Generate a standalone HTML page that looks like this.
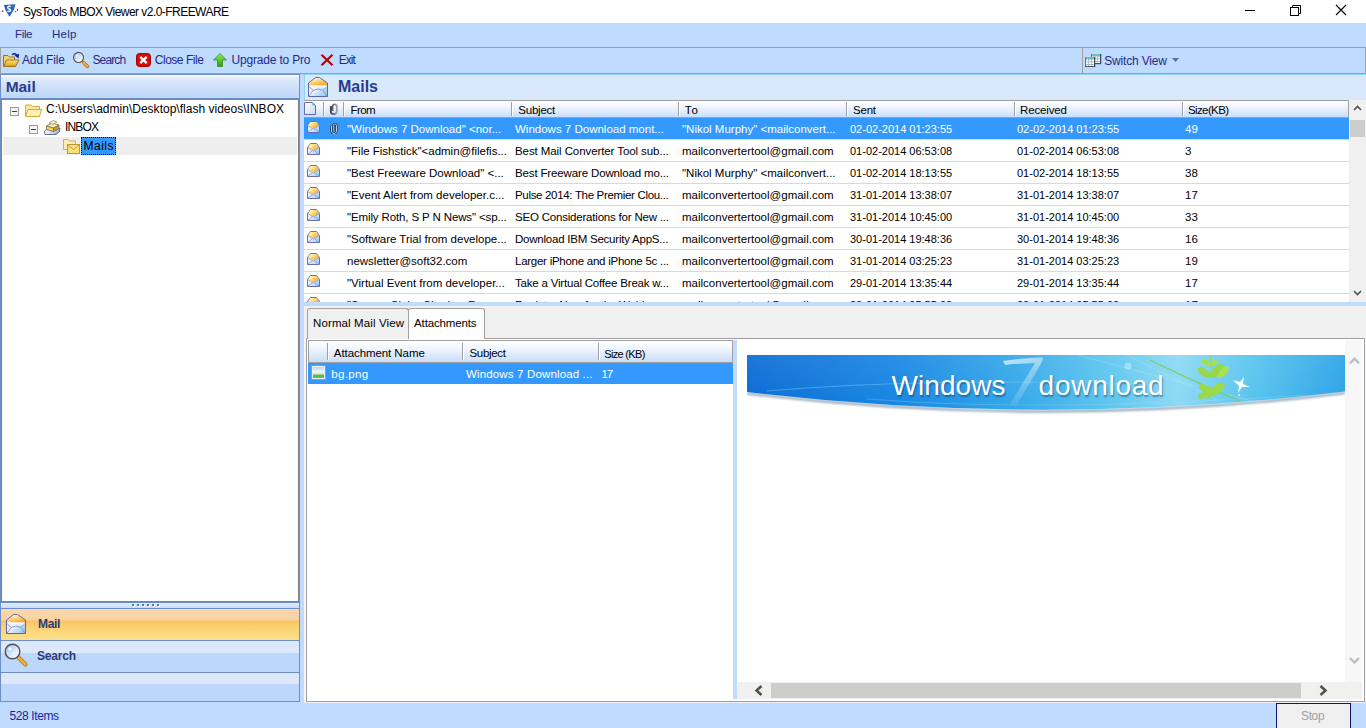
<!DOCTYPE html>
<html><head><meta charset="utf-8">
<style>
*{margin:0;padding:0;box-sizing:border-box}
html,body{width:1366px;height:728px;overflow:hidden;background:#BFDBFF;font-family:"Liberation Sans",sans-serif;position:relative}
.a{position:absolute}
.t{position:absolute;line-height:1;white-space:nowrap}
</style></head><body>

<div class="a" style="left:0;top:0;width:1366px;height:23px;background:#fff"></div>
<svg class="a" style="left:0px;top:0px" width="20" height="20" viewBox="0 0 20 20">
<defs><linearGradient id="sh" x1="0" y1="0" x2="1" y2="1"><stop offset="0" stop-color="#1C4C9C"/><stop offset="0.5" stop-color="#2E6AC8"/><stop offset="1" stop-color="#1A3E88"/></linearGradient></defs>
<path d="M4 5 L15.5 4.2 L14 9.5 L9.5 16.8 L5.5 10 Z" fill="url(#sh)"/>
<path d="M10.8 6.6 C9.8 5.9 7.6 6.1 7.6 7.6 C7.6 9.2 10.6 8.8 10.6 10.3 C10.6 11.6 8.6 11.6 7.4 11" fill="none" stroke="#F0F4FF" stroke-width="1.5"/>
<rect x="1.8" y="10.5" width="1.5" height="1.5" fill="#555"/><rect x="15" y="11" width="1.2" height="1.2" fill="#555"/><rect x="17" y="9" width="1" height="2" fill="#666"/>
</svg>
<div class="t" style="left:23.00px;top:6.24px;font-size:12px;color:#000;letter-spacing:-0.547px;">SysTools MBOX Viewer v2.0-FREEWARE</div>
<div class="a" style="left:1245px;top:10px;width:10px;height:1px;background:#000"></div>
<svg class="a" style="left:1290px;top:5px" width="11" height="11" viewBox="0 0 11 11"><rect x="0.5" y="2.5" width="8" height="8" fill="none" stroke="#000"/><path d="M2.5 2.5 V0.5 H10.5 V8.5 H8.5" fill="none" stroke="#000"/></svg>
<svg class="a" style="left:1335px;top:4px" width="12" height="12" viewBox="0 0 12 12"><path d="M1 1 L11 11 M11 1 L1 11" stroke="#000" stroke-width="1.1"/></svg>
<div class="t" style="left:15.00px;top:29.27px;font-size:11.5px;color:#1F2A7E;letter-spacing:-0.343px;">File</div>
<div class="t" style="left:52.00px;top:29.27px;font-size:11.5px;color:#1F2A7E;letter-spacing:0.283px;">Help</div>
<div class="a" style="left:0;top:47px;width:1366px;height:27px;border:1px solid #A0A0A0;background:#BFDBFF"></div>
<div class="a" style="left:1082px;top:48px;width:1px;height:25px;background:#A0A0A0"></div>
<div class="a" style="left:0;top:74px;width:1366px;height:1px;background:#A8CDF2"></div>
<svg class="a" style="left:3px;top:52px" width="17" height="16" viewBox="0 0 17 16">
<defs><linearGradient id="fo1" x1="0" y1="0" x2="0" y2="1"><stop offset="0" stop-color="#FCE67A"/><stop offset="1" stop-color="#D99A16"/></linearGradient></defs>
<path d="M0.5 3.5 H5 L6.5 5 H11.5 V14.5 H0.5 Z" fill="#F2D46A" stroke="#A07418"/>
<path d="M0.5 14.5 L3.5 8 H16 L12.5 14.5 Z" fill="url(#fo1)" stroke="#A07418"/>
<path d="M9 2.8 Q11.5 0.6 13.8 3.2" fill="none" stroke="#0C1E86" stroke-width="1.5"/><path d="M11.6 3.6 L16 1.8 L15.6 6.4 Z" fill="#0C1E86"/>
</svg>
<div class="t" style="left:22.00px;top:54.44px;font-size:12px;color:#1F2A86;letter-spacing:-0.146px;">Add File</div>
<svg class="a" style="left:73px;top:52px" width="17" height="17" viewBox="0 0 17 17">
<defs><linearGradient id="mg1" x1="0" y1="0" x2="1" y2="1"><stop offset="0" stop-color="#8EB8F0"/><stop offset="0.6" stop-color="#DCEEFC"/><stop offset="1" stop-color="#FFFFFF"/></linearGradient></defs>
<path d="M10.5 10.5 L14.5 14.5" stroke="#B06A10" stroke-width="3.2" stroke-linecap="round"/>
<path d="M10.5 10.5 L14.5 14.5" stroke="#F8B030" stroke-width="2" stroke-linecap="round"/>
<circle cx="5.5" cy="5.5" r="5" fill="url(#mg1)" stroke="#5A4C50" stroke-width="1.1"/>
<circle cx="3.8" cy="3.8" r="1" fill="#fff" opacity="0.9"/>
</svg>
<div class="t" style="left:92.50px;top:54.44px;font-size:12px;color:#1F2A86;letter-spacing:-0.884px;">Search</div>
<svg class="a" style="left:136px;top:53px" width="15" height="14" viewBox="0 0 15 14">
<rect x="0.5" y="0.5" width="14" height="13" rx="3" fill="#D80C0C" stroke="#A00000"/>
<path d="M4.3 3.8 L10.7 10.2 M10.7 3.8 L4.3 10.2" stroke="#fff" stroke-width="2.4"/>
</svg>
<div class="t" style="left:154.80px;top:54.44px;font-size:12px;color:#1F2A86;letter-spacing:-0.483px;">Close File</div>
<svg class="a" style="left:213px;top:53px" width="14" height="14" viewBox="0 0 14 14">
<defs><linearGradient id="ga1" x1="0" y1="0" x2="0" y2="1"><stop offset="0" stop-color="#8CF060"/><stop offset="1" stop-color="#2E9A10"/></linearGradient></defs>
<path d="M7 0.5 L13.5 7 H9.5 V13.5 H4.5 V7 H0.5 Z" fill="url(#ga1)" stroke="#3A8A1A" stroke-width="0.8"/>
</svg>
<div class="t" style="left:231.50px;top:54.44px;font-size:12px;color:#1F2A86;letter-spacing:-0.183px;">Upgrade to Pro</div>
<svg class="a" style="left:320px;top:54px" width="14" height="12" viewBox="0 0 14 12">
<path d="M1.5 0.8 L12.5 11.2 M12.5 0.8 L1.5 11.2" stroke="#C00000" stroke-width="2.2"/>
</svg>
<div class="t" style="left:338.80px;top:54.44px;font-size:12px;color:#1F2A86;letter-spacing:-1.001px;">Exit</div>
<svg class="a" style="left:1085px;top:54px" width="17" height="13" viewBox="0 0 17 13"><rect x="6" y="0" width="10" height="10" fill="#A4B2C8"/><rect x="6" y="0" width="10" height="2" fill="#7ABABA"/><rect x="7" y="2.6" width="2.2" height="1.8" fill="#fff"/><rect x="10" y="2.6" width="2.2" height="1.8" fill="#fff"/><rect x="13" y="2.6" width="2.2" height="1.8" fill="#fff"/><rect x="7" y="5.3" width="2.2" height="1.8" fill="#fff"/><rect x="10" y="5.3" width="2.2" height="1.8" fill="#fff"/><rect x="13" y="5.3" width="2.2" height="1.8" fill="#fff"/><rect x="7" y="8.0" width="2.2" height="1.8" fill="#fff"/><rect x="10" y="8.0" width="2.2" height="1.8" fill="#fff"/><rect x="13" y="8.0" width="2.2" height="1.8" fill="#fff"/><rect x="6" y="0" width="1" height="10" fill="#3E8A8A"/><rect x="6" y="9.2" width="10" height="1" fill="#203848"/><rect x="15.2" y="0" width="1" height="10" fill="#203848"/><rect x="15" y="0" width="1.2" height="2" fill="#0E6A6A"/><rect x="0" y="3" width="10" height="10" fill="#A4B2C8"/><rect x="0" y="3" width="10" height="2" fill="#7ABABA"/><rect x="1" y="5.6" width="2.2" height="1.8" fill="#fff"/><rect x="4" y="5.6" width="2.2" height="1.8" fill="#fff"/><rect x="7" y="5.6" width="2.2" height="1.8" fill="#fff"/><rect x="1" y="8.3" width="2.2" height="1.8" fill="#fff"/><rect x="4" y="8.3" width="2.2" height="1.8" fill="#fff"/><rect x="7" y="8.3" width="2.2" height="1.8" fill="#fff"/><rect x="1" y="11.0" width="2.2" height="1.8" fill="#fff"/><rect x="4" y="11.0" width="2.2" height="1.8" fill="#fff"/><rect x="7" y="11.0" width="2.2" height="1.8" fill="#fff"/><rect x="0" y="3" width="1" height="10" fill="#3E8A8A"/><rect x="0" y="12.2" width="10" height="1" fill="#203848"/><rect x="9.2" y="3" width="1" height="10" fill="#203848"/><rect x="9" y="3" width="1.2" height="2" fill="#0E6A6A"/></svg>
<div class="t" style="left:1104.30px;top:54.64px;font-size:12px;color:#1F2A86;letter-spacing:-0.177px;">Switch View</div>
<svg class="a" style="left:1172px;top:58px" width="7" height="4" viewBox="0 0 7 4"><path d="M0 0 H7 L3.5 4 Z" fill="#5A6AA8"/></svg>
<div class="a" style="left:0;top:74px;width:300px;height:628px;border:1px solid #6D8EC6;background:#BFDBFF"></div>
<div class="a" style="left:1px;top:75px;width:298px;height:23px;background:linear-gradient(#FFFFFF 0,#FFFFFF 1px,#E2EDFC 2px,#D2E3FA 45%,#BCD7FA)"></div>
<div class="t" style="left:5.70px;top:79.08px;font-size:15.5px;color:#2A3B8F;font-weight:bold;letter-spacing:-0.048px;">Mail</div>
<div class="a" style="left:1px;top:98px;width:298px;height:1px;background:#6D8EC6"></div>
<div class="a" style="left:1px;top:99px;width:298px;height:503px;background:#fff;border:1px solid #828282"></div>
<div class="a" style="left:3px;top:137px;width:294px;height:18px;background:#EEEEEE"></div>
<svg class="a" style="left:10px;top:107px" width="9" height="9" viewBox="0 0 9 9"><rect x="0.5" y="0.5" width="8" height="8" fill="#F4F4F4" stroke="#9A9A9A"/><path d="M2 4.5 H7" stroke="#2A3A8A"/></svg>
<svg class="a" style="left:29px;top:125px" width="9" height="9" viewBox="0 0 9 9"><rect x="0.5" y="0.5" width="8" height="8" fill="#F4F4F4" stroke="#9A9A9A"/><path d="M2 4.5 H7" stroke="#2A3A8A"/></svg>
<svg class="a" style="left:25px;top:104px" width="17" height="13" viewBox="0 0 17 13">
<path d="M0.5 1 H6 L7.5 2.5 H14.5 V12.5 H0.5 Z" fill="#FBE6A0" stroke="#D9A83A"/>
<path d="M0.5 12.5 L3 5.5 H16.5 L14.5 12.5 Z" fill="#FFF0B8" stroke="#D9A83A"/>
</svg>
<div class="t" style="left:46.00px;top:103.44px;font-size:12px;color:#000;letter-spacing:0.014px;">C:\Users\admin\Desktop\flash videos\INBOX</div>
<svg class="a" style="left:44px;top:119px" width="17" height="17" viewBox="0 0 17 17">
<defs><linearGradient id="tr" x1="0" y1="0" x2="1" y2="0"><stop offset="0" stop-color="#FFFFFF"/><stop offset="1" stop-color="#8EA8E0"/></linearGradient></defs>
<path d="M0.5 12 L4 9.5 H16 L15.5 12.5 L12 15.5 H1 Z" fill="url(#tr)" stroke="#4E6A80" stroke-width="0.9"/>
<path d="M2.5 7 L8 4 L15 6 L9.5 9 Z" fill="#FBF0B0" stroke="#7A7050" stroke-width="0.8"/>
<path d="M2.5 7 L9.5 9 V12.5 L2.5 10.5 Z" fill="#F4D060" stroke="#7A7050" stroke-width="0.8"/>
<path d="M9.5 9 L15 6 V9.5 L9.5 12.5 Z" fill="#C89A28" stroke="#7A7050" stroke-width="0.8"/>
<path d="M5 4 L9 1.5 L13 3 L9 5.5 Z" fill="#FBF4C8" stroke="#8A8060" stroke-width="0.7"/>
</svg>
<div class="t" style="left:65.00px;top:121.44px;font-size:12px;color:#000;letter-spacing:-0.835px;">INBOX</div>
<svg class="a" style="left:63px;top:138px" width="17" height="16" viewBox="0 0 17 16">
<path d="M0.5 1.5 H5 L6.5 3 H12.5 V11.5 H0.5 Z" fill="#FBEBB8" stroke="#C8B070"/>
<rect x="4.5" y="6.5" width="12" height="9" fill="#FBE07C" stroke="#B89A3A"/>
<path d="M4.5 6.5 L10.5 11.5 L16.5 6.5" fill="none" stroke="#B89A3A"/>
</svg>
<div class="a" style="left:81px;top:137px;width:35px;height:18px;background:#3399FF;border:1px dotted #000"></div>
<div class="t" style="left:83.50px;top:139.94px;font-size:12px;color:#000;letter-spacing:0.500px;">Mails</div>
<div class="a" style="left:1px;top:602px;width:298px;height:7px;background:linear-gradient(#E6EDFC,#C6DCF8);border-top:1px solid #6D8EC6;border-bottom:1px solid #6D8EC6"></div>
<div class="a" style="left:133px;top:605px;width:2px;height:2px;background:#FFFFFF"></div><div class="a" style="left:132px;top:604px;width:2px;height:2px;background:#4A7CC8"></div><div class="a" style="left:138px;top:605px;width:2px;height:2px;background:#FFFFFF"></div><div class="a" style="left:137px;top:604px;width:2px;height:2px;background:#4A7CC8"></div><div class="a" style="left:143px;top:605px;width:2px;height:2px;background:#FFFFFF"></div><div class="a" style="left:142px;top:604px;width:2px;height:2px;background:#4A7CC8"></div><div class="a" style="left:148px;top:605px;width:2px;height:2px;background:#FFFFFF"></div><div class="a" style="left:147px;top:604px;width:2px;height:2px;background:#4A7CC8"></div><div class="a" style="left:153px;top:605px;width:2px;height:2px;background:#FFFFFF"></div><div class="a" style="left:152px;top:604px;width:2px;height:2px;background:#4A7CC8"></div><div class="a" style="left:158px;top:605px;width:2px;height:2px;background:#FFFFFF"></div><div class="a" style="left:157px;top:604px;width:2px;height:2px;background:#4A7CC8"></div>
<div class="a" style="left:1px;top:609px;width:298px;height:32px;background:linear-gradient(#FAD8AC 0,#F9D2A0 11px,#F8C262 12px,#FAD070 55%,#FDE08C);border-bottom:1px solid #6D8EC6"></div>
<svg class="a" style="left:6px;top:614px" width="20" height="20" viewBox="0 0 20 20">
<defs><linearGradient id="nvf" x1="0.2" y1="0" x2="0.8" y2="1"><stop offset="0" stop-color="#FFFBD8"/><stop offset="0.55" stop-color="#FBC860"/><stop offset="1" stop-color="#F4A018"/></linearGradient>
<linearGradient id="nvb" x1="0" y1="0" x2="1" y2="1"><stop offset="0" stop-color="#FFFFFF"/><stop offset="0.5" stop-color="#EAF2FC"/><stop offset="1" stop-color="#7EC0F2"/></linearGradient></defs>
<path d="M0.5 6 L7.7 0.5 H11.5 L19.5 6 V19.5 H0.5 Z" fill="url(#nvb)"/>
<path d="M1 6 L7.8 1 H11.4 L19 6 V9 H1 Z" fill="url(#nvf)"/>
<path d="M1.2 8.3 H18.8 V11.2 Q10 8.6 1.2 11.2 Z" fill="#F2F5FC"/>
<path d="M1 9.5 L5 13.5 Q10 10.5 15 13.5 L19 9.5 M5 13.5 L1.2 19 M15 13.5 L18.8 19" fill="none" stroke="#8890C4" stroke-width="0.9"/>
<path d="M0.5 6 L7.7 0.5 H11.5 L19.5 6 V19.5 H0.5 Z" fill="none" stroke="#5E66A8"/>
</svg>
<div class="t" style="left:38.00px;top:618.34px;font-size:12px;color:#2B3A78;font-weight:bold;letter-spacing:-0.346px;">Mail</div>
<div class="a" style="left:1px;top:641px;width:298px;height:32px;background:linear-gradient(#DCE9FC 0,#DCE9FC 12px,#BDD7FA 12px,#BDD7FA);border-bottom:1px solid #6D8EC6"></div>
<svg class="a" style="left:4px;top:643px" width="26" height="26" viewBox="0 0 26 26">
<defs><linearGradient id="mg2" x1="0" y1="0" x2="1" y2="1"><stop offset="0" stop-color="#8EB8F0"/><stop offset="0.6" stop-color="#DCEEFC"/><stop offset="1" stop-color="#FFFFFF"/></linearGradient></defs>
<path d="M14.5 14.5 L21.5 21.5" stroke="#A86810" stroke-width="4" stroke-linecap="round"/>
<path d="M14.5 14.5 L21.5 21.5" stroke="#F8B030" stroke-width="2.6" stroke-linecap="round"/>
<circle cx="8.5" cy="8.5" r="7.3" fill="url(#mg2)" stroke="#5A4C50" stroke-width="1.4"/>
<circle cx="6" cy="5.8" r="1.6" fill="#fff" opacity="0.9"/>
</svg>
<div class="t" style="left:37.00px;top:650.14px;font-size:12px;color:#2B3A78;font-weight:bold;letter-spacing:-0.205px;">Search</div>
<div class="a" style="left:1px;top:673px;width:298px;height:28px;background:linear-gradient(#DCE9FC 0,#DCE9FC 11px,#BDD7FA 11px,#BDD7FA)"></div>
<div class="t" style="left:9.50px;top:710.34px;font-size:12px;color:#1E1E9A;letter-spacing:-0.399px;">528 Items</div>
<div class="a" style="left:1276px;top:703px;width:75px;height:26px;background:#F0F0F0;border:1px solid #14146A"></div>
<div class="t" style="left:1301.00px;top:709.84px;font-size:12px;color:#A0A0A0;letter-spacing:-0.362px;">Stop</div>
<div class="a" style="left:304px;top:74px;width:1062px;height:26px;background:#DAE8FC;border-top:1px solid #8ED6F2;border-left:1px solid #8ED6F2"></div>
<svg class="a" style="left:308px;top:77px" width="20" height="20" viewBox="0 0 20 20">
<defs><linearGradient id="mhf" x1="0.2" y1="0" x2="0.8" y2="1"><stop offset="0" stop-color="#FFFBD8"/><stop offset="0.55" stop-color="#FBC860"/><stop offset="1" stop-color="#F4A018"/></linearGradient>
<linearGradient id="mhb" x1="0" y1="0" x2="1" y2="1"><stop offset="0" stop-color="#FFFFFF"/><stop offset="0.5" stop-color="#EAF2FC"/><stop offset="1" stop-color="#7EC0F2"/></linearGradient></defs>
<path d="M0.5 6 L7.7 0.5 H11.5 L19.5 6 V19.5 H0.5 Z" fill="url(#mhb)"/>
<path d="M1 6 L7.8 1 H11.4 L19 6 V9 H1 Z" fill="url(#mhf)"/>
<path d="M1.2 8.3 H18.8 V11.2 Q10 8.6 1.2 11.2 Z" fill="#F2F5FC"/>
<path d="M1 9.5 L5 13.5 Q10 10.5 15 13.5 L19 9.5 M5 13.5 L1.2 19 M15 13.5 L18.8 19" fill="none" stroke="#8890C4" stroke-width="0.9"/>
<path d="M0.5 6 L7.7 0.5 H11.5 L19.5 6 V19.5 H0.5 Z" fill="none" stroke="#5E66A8"/>
</svg>
<div class="t" style="left:338.00px;top:79.26px;font-size:16px;color:#263C8C;font-weight:bold;letter-spacing:-0.004px;">Mails</div>
<div class="a" style="left:304px;top:100px;width:1045px;height:202px;background:#fff;overflow:hidden">
<div class="a" style="left:0;top:0;width:1045px;height:18px;background:linear-gradient(#FFFFFF,#EEF4FE 40%,#C9DEFB);border-top:1px solid #A0A0A0;border-bottom:1px solid #A0A0A0;border-right:1px solid #A0A0A0"></div>
<div class="a" style="left:19px;top:2px;width:1px;height:14px;background:#A0A0A0"></div><div class="a" style="left:20px;top:2px;width:1px;height:14px;background:#FFFFFF"></div>
<div class="a" style="left:39px;top:2px;width:1px;height:14px;background:#A0A0A0"></div><div class="a" style="left:40px;top:2px;width:1px;height:14px;background:#FFFFFF"></div>
<div class="a" style="left:207px;top:2px;width:1px;height:14px;background:#A0A0A0"></div><div class="a" style="left:208px;top:2px;width:1px;height:14px;background:#FFFFFF"></div>
<div class="a" style="left:374px;top:2px;width:1px;height:14px;background:#A0A0A0"></div><div class="a" style="left:375px;top:2px;width:1px;height:14px;background:#FFFFFF"></div>
<div class="a" style="left:542px;top:2px;width:1px;height:14px;background:#A0A0A0"></div><div class="a" style="left:543px;top:2px;width:1px;height:14px;background:#FFFFFF"></div>
<div class="a" style="left:710px;top:2px;width:1px;height:14px;background:#A0A0A0"></div><div class="a" style="left:711px;top:2px;width:1px;height:14px;background:#FFFFFF"></div>
<div class="a" style="left:878px;top:2px;width:1px;height:14px;background:#A0A0A0"></div><div class="a" style="left:879px;top:2px;width:1px;height:14px;background:#FFFFFF"></div>
<svg class="a" style="left:0px;top:1px" width="13" height="15" viewBox="0 0 13 15">
<defs><linearGradient id="pg" x1="0" y1="0" x2="1" y2="1"><stop offset="0" stop-color="#FFFFFF"/><stop offset="1" stop-color="#C4DCF4"/></linearGradient></defs>
<path d="M0.5 1.5 H8.5 L11.5 4.5 V13.5 H0.5 Z" fill="url(#pg)" stroke="#6A6AB0"/>
<path d="M8.5 1.5 L11.5 4.5 H8.5 Z" fill="#5AA8E8"/>
</svg>
<svg class="a" style="left:24.5px;top:2.5px" width="10" height="12" viewBox="0 0 10 12">
<defs><linearGradient id="hc" x1="0" y1="0" x2="1" y2="0"><stop offset="0" stop-color="#3C4450"/><stop offset="1" stop-color="#9AA4B0"/></linearGradient></defs>
<path d="M1.8 3 V8.2 A3 3 0 0 0 7.8 8.2 V3 A2.2 2.2 0 0 0 3.6 3 V8" fill="none" stroke="url(#hc)" stroke-width="1.8"/></svg>
<div class="t" style="left:46.50px;top:5.02px;font-size:11.5px;color:#000;letter-spacing:-0.610px;">From</div>
<div class="t" style="left:214.30px;top:5.02px;font-size:11.5px;color:#000;letter-spacing:-0.226px;">Subject</div>
<div class="t" style="left:380.80px;top:5.02px;font-size:11.5px;color:#000;letter-spacing:0.854px;">To</div>
<div class="t" style="left:549.00px;top:5.02px;font-size:11.5px;color:#000;letter-spacing:-0.219px;">Sent</div>
<div class="t" style="left:716.00px;top:5.02px;font-size:11.5px;color:#000;letter-spacing:-0.135px;">Received</div>
<div class="t" style="left:884.00px;top:5.02px;font-size:11.5px;color:#000;letter-spacing:-0.624px;">Size(KB)</div>
<div class="a" style="left:0;top:18px;width:1045px;height:21px;background:#3399FF"></div>
<div class="a" style="left:0;top:39px;width:1045px;height:1px;background:#C6DDF8"></div>
<svg class="a" style="left:3px;top:21px" width="14" height="13" viewBox="0 0 14 13">
<defs><linearGradient id="ef321" x1="0" y1="0" x2="1" y2="0.6"><stop offset="0" stop-color="#FFFBE0"/><stop offset="0.35" stop-color="#FFEE90"/><stop offset="0.75" stop-color="#FFC050"/><stop offset="1" stop-color="#F8B040"/></linearGradient>
<linearGradient id="eb321" x1="0" y1="0" x2="1" y2="1"><stop offset="0" stop-color="#FFFFFF"/><stop offset="0.5" stop-color="#E4F0FC"/><stop offset="1" stop-color="#7CC8F4"/></linearGradient></defs>
<path d="M0.5 4.5 L3.5 0.5 H9.5 L12.5 4.5 V11.5 H0.5 Z" fill="url(#eb321)" stroke="#6C6CAC"/>
<path d="M1 4.5 L3.8 1 H9.2 L12 4.5 L6.5 7.5 Z" fill="url(#ef321)"/>
<path d="M0.8 4.5 L6.5 8.2 L12.2 4.5 M0.8 11.2 L5 8 M12.2 11.2 L8 8" fill="none" stroke="#9090C8" stroke-width="0.8"/>
</svg>
<svg class="a" style="left:25.5px;top:22.5px" width="8" height="11" viewBox="0 0 8 11">
<path d="M1.5 2.5 V8 A2.5 2.5 0 0 0 6.5 8 V2.5 A1.6 1.6 0 0 0 3.3 2.5 V7.5" fill="none" stroke="#181818" stroke-width="2.1"/><path d="M1.5 2.5 V8 A2.5 2.5 0 0 0 6.5 8 V2.5 A1.6 1.6 0 0 0 3.3 2.5 V7.5" fill="none" stroke="#fff" stroke-width="0.8"/></svg>
<div class="t" style="left:43.00px;top:24.27px;font-size:11.5px;color:#fff;">"Windows 7 Download" &lt;nor...</div>
<div class="t" style="left:211.00px;top:24.27px;font-size:11.5px;color:#fff;">Windows 7 Download mont...</div>
<div class="t" style="left:378.00px;top:24.27px;font-size:11.5px;color:#fff;">"Nikol Murphy" &lt;mailconvert...</div>
<div class="t" style="left:546.00px;top:24.09px;font-size:11px;color:#fff;">02-02-2014 01:23:55</div>
<div class="t" style="left:713.00px;top:24.09px;font-size:11px;color:#fff;">02-02-2014 01:23:55</div>
<div class="t" style="left:881.00px;top:24.27px;font-size:11.5px;color:#fff;">49</div>
<div class="a" style="left:0;top:61px;width:1045px;height:1px;background:#C6DDF8"></div>
<svg class="a" style="left:3px;top:43px" width="14" height="13" viewBox="0 0 14 13">
<defs><linearGradient id="ef343" x1="0" y1="0" x2="1" y2="0.6"><stop offset="0" stop-color="#FFFBE0"/><stop offset="0.35" stop-color="#FFEE90"/><stop offset="0.75" stop-color="#FFC050"/><stop offset="1" stop-color="#F8B040"/></linearGradient>
<linearGradient id="eb343" x1="0" y1="0" x2="1" y2="1"><stop offset="0" stop-color="#FFFFFF"/><stop offset="0.5" stop-color="#E4F0FC"/><stop offset="1" stop-color="#7CC8F4"/></linearGradient></defs>
<path d="M0.5 4.5 L3.5 0.5 H9.5 L12.5 4.5 V11.5 H0.5 Z" fill="url(#eb343)" stroke="#6C6CAC"/>
<path d="M1 4.5 L3.8 1 H9.2 L12 4.5 L6.5 7.5 Z" fill="url(#ef343)"/>
<path d="M0.8 4.5 L6.5 8.2 L12.2 4.5 M0.8 11.2 L5 8 M12.2 11.2 L8 8" fill="none" stroke="#9090C8" stroke-width="0.8"/>
</svg>
<div class="t" style="left:43.00px;top:46.27px;font-size:11.5px;color:#000;letter-spacing:-0.004px;">"File Fishstick"&lt;admin@filefis...</div>
<div class="t" style="left:211.00px;top:46.27px;font-size:11.5px;color:#000;letter-spacing:-0.086px;">Best Mail Converter Tool sub...</div>
<div class="t" style="left:378.00px;top:46.27px;font-size:11.5px;color:#000;">mailconvertertool@gmail.com</div>
<div class="t" style="left:546.00px;top:46.09px;font-size:11px;color:#000;">01-02-2014 06:53:08</div>
<div class="t" style="left:713.00px;top:46.09px;font-size:11px;color:#000;">01-02-2014 06:53:08</div>
<div class="t" style="left:881.00px;top:46.27px;font-size:11.5px;color:#000;">3</div>
<div class="a" style="left:0;top:83px;width:1045px;height:1px;background:#C6DDF8"></div>
<svg class="a" style="left:3px;top:65px" width="14" height="13" viewBox="0 0 14 13">
<defs><linearGradient id="ef365" x1="0" y1="0" x2="1" y2="0.6"><stop offset="0" stop-color="#FFFBE0"/><stop offset="0.35" stop-color="#FFEE90"/><stop offset="0.75" stop-color="#FFC050"/><stop offset="1" stop-color="#F8B040"/></linearGradient>
<linearGradient id="eb365" x1="0" y1="0" x2="1" y2="1"><stop offset="0" stop-color="#FFFFFF"/><stop offset="0.5" stop-color="#E4F0FC"/><stop offset="1" stop-color="#7CC8F4"/></linearGradient></defs>
<path d="M0.5 4.5 L3.5 0.5 H9.5 L12.5 4.5 V11.5 H0.5 Z" fill="url(#eb365)" stroke="#6C6CAC"/>
<path d="M1 4.5 L3.8 1 H9.2 L12 4.5 L6.5 7.5 Z" fill="url(#ef365)"/>
<path d="M0.8 4.5 L6.5 8.2 L12.2 4.5 M0.8 11.2 L5 8 M12.2 11.2 L8 8" fill="none" stroke="#9090C8" stroke-width="0.8"/>
</svg>
<div class="t" style="left:43.00px;top:68.27px;font-size:11.5px;color:#000;">"Best Freeware Download" &lt;...</div>
<div class="t" style="left:211.00px;top:68.27px;font-size:11.5px;color:#000;letter-spacing:-0.143px;">Best Freeware Download mo...</div>
<div class="t" style="left:378.00px;top:68.27px;font-size:11.5px;color:#000;">"Nikol Murphy" &lt;mailconvert...</div>
<div class="t" style="left:546.00px;top:68.09px;font-size:11px;color:#000;">01-02-2014 18:13:55</div>
<div class="t" style="left:713.00px;top:68.09px;font-size:11px;color:#000;">01-02-2014 18:13:55</div>
<div class="t" style="left:881.00px;top:68.27px;font-size:11.5px;color:#000;">38</div>
<div class="a" style="left:0;top:105px;width:1045px;height:1px;background:#C6DDF8"></div>
<svg class="a" style="left:3px;top:87px" width="14" height="13" viewBox="0 0 14 13">
<defs><linearGradient id="ef387" x1="0" y1="0" x2="1" y2="0.6"><stop offset="0" stop-color="#FFFBE0"/><stop offset="0.35" stop-color="#FFEE90"/><stop offset="0.75" stop-color="#FFC050"/><stop offset="1" stop-color="#F8B040"/></linearGradient>
<linearGradient id="eb387" x1="0" y1="0" x2="1" y2="1"><stop offset="0" stop-color="#FFFFFF"/><stop offset="0.5" stop-color="#E4F0FC"/><stop offset="1" stop-color="#7CC8F4"/></linearGradient></defs>
<path d="M0.5 4.5 L3.5 0.5 H9.5 L12.5 4.5 V11.5 H0.5 Z" fill="url(#eb387)" stroke="#6C6CAC"/>
<path d="M1 4.5 L3.8 1 H9.2 L12 4.5 L6.5 7.5 Z" fill="url(#ef387)"/>
<path d="M0.8 4.5 L6.5 8.2 L12.2 4.5 M0.8 11.2 L5 8 M12.2 11.2 L8 8" fill="none" stroke="#9090C8" stroke-width="0.8"/>
</svg>
<div class="t" style="left:43.00px;top:90.27px;font-size:11.5px;color:#000;">"Event Alert from developer.c...</div>
<div class="t" style="left:211.00px;top:90.27px;font-size:11.5px;color:#000;letter-spacing:-0.321px;">Pulse 2014: The Premier Clou...</div>
<div class="t" style="left:378.00px;top:90.27px;font-size:11.5px;color:#000;">mailconvertertool@gmail.com</div>
<div class="t" style="left:546.00px;top:90.09px;font-size:11px;color:#000;">31-01-2014 13:38:07</div>
<div class="t" style="left:713.00px;top:90.09px;font-size:11px;color:#000;">31-01-2014 13:38:07</div>
<div class="t" style="left:881.00px;top:90.27px;font-size:11.5px;color:#000;">17</div>
<div class="a" style="left:0;top:127px;width:1045px;height:1px;background:#C6DDF8"></div>
<svg class="a" style="left:3px;top:109px" width="14" height="13" viewBox="0 0 14 13">
<defs><linearGradient id="ef3109" x1="0" y1="0" x2="1" y2="0.6"><stop offset="0" stop-color="#FFFBE0"/><stop offset="0.35" stop-color="#FFEE90"/><stop offset="0.75" stop-color="#FFC050"/><stop offset="1" stop-color="#F8B040"/></linearGradient>
<linearGradient id="eb3109" x1="0" y1="0" x2="1" y2="1"><stop offset="0" stop-color="#FFFFFF"/><stop offset="0.5" stop-color="#E4F0FC"/><stop offset="1" stop-color="#7CC8F4"/></linearGradient></defs>
<path d="M0.5 4.5 L3.5 0.5 H9.5 L12.5 4.5 V11.5 H0.5 Z" fill="url(#eb3109)" stroke="#6C6CAC"/>
<path d="M1 4.5 L3.8 1 H9.2 L12 4.5 L6.5 7.5 Z" fill="url(#ef3109)"/>
<path d="M0.8 4.5 L6.5 8.2 L12.2 4.5 M0.8 11.2 L5 8 M12.2 11.2 L8 8" fill="none" stroke="#9090C8" stroke-width="0.8"/>
</svg>
<div class="t" style="left:43.00px;top:112.27px;font-size:11.5px;color:#000;letter-spacing:-0.126px;">"Emily Roth, S P N News" &lt;sp...</div>
<div class="t" style="left:211.00px;top:112.27px;font-size:11.5px;color:#000;letter-spacing:-0.200px;">SEO Considerations for New ...</div>
<div class="t" style="left:378.00px;top:112.27px;font-size:11.5px;color:#000;">mailconvertertool@gmail.com</div>
<div class="t" style="left:546.00px;top:112.09px;font-size:11px;color:#000;">31-01-2014 10:45:00</div>
<div class="t" style="left:713.00px;top:112.09px;font-size:11px;color:#000;">31-01-2014 10:45:00</div>
<div class="t" style="left:881.00px;top:112.27px;font-size:11.5px;color:#000;">33</div>
<div class="a" style="left:0;top:149px;width:1045px;height:1px;background:#C6DDF8"></div>
<svg class="a" style="left:3px;top:131px" width="14" height="13" viewBox="0 0 14 13">
<defs><linearGradient id="ef3131" x1="0" y1="0" x2="1" y2="0.6"><stop offset="0" stop-color="#FFFBE0"/><stop offset="0.35" stop-color="#FFEE90"/><stop offset="0.75" stop-color="#FFC050"/><stop offset="1" stop-color="#F8B040"/></linearGradient>
<linearGradient id="eb3131" x1="0" y1="0" x2="1" y2="1"><stop offset="0" stop-color="#FFFFFF"/><stop offset="0.5" stop-color="#E4F0FC"/><stop offset="1" stop-color="#7CC8F4"/></linearGradient></defs>
<path d="M0.5 4.5 L3.5 0.5 H9.5 L12.5 4.5 V11.5 H0.5 Z" fill="url(#eb3131)" stroke="#6C6CAC"/>
<path d="M1 4.5 L3.8 1 H9.2 L12 4.5 L6.5 7.5 Z" fill="url(#ef3131)"/>
<path d="M0.8 4.5 L6.5 8.2 L12.2 4.5 M0.8 11.2 L5 8 M12.2 11.2 L8 8" fill="none" stroke="#9090C8" stroke-width="0.8"/>
</svg>
<div class="t" style="left:43.00px;top:134.27px;font-size:11.5px;color:#000;letter-spacing:-0.008px;">"Software Trial from develope...</div>
<div class="t" style="left:211.00px;top:134.27px;font-size:11.5px;color:#000;letter-spacing:-0.230px;">Download IBM Security AppS...</div>
<div class="t" style="left:378.00px;top:134.27px;font-size:11.5px;color:#000;">mailconvertertool@gmail.com</div>
<div class="t" style="left:546.00px;top:134.09px;font-size:11px;color:#000;">30-01-2014 19:48:36</div>
<div class="t" style="left:713.00px;top:134.09px;font-size:11px;color:#000;">30-01-2014 19:48:36</div>
<div class="t" style="left:881.00px;top:134.27px;font-size:11.5px;color:#000;">16</div>
<div class="a" style="left:0;top:171px;width:1045px;height:1px;background:#C6DDF8"></div>
<svg class="a" style="left:3px;top:153px" width="14" height="13" viewBox="0 0 14 13">
<defs><linearGradient id="ef3153" x1="0" y1="0" x2="1" y2="0.6"><stop offset="0" stop-color="#FFFBE0"/><stop offset="0.35" stop-color="#FFEE90"/><stop offset="0.75" stop-color="#FFC050"/><stop offset="1" stop-color="#F8B040"/></linearGradient>
<linearGradient id="eb3153" x1="0" y1="0" x2="1" y2="1"><stop offset="0" stop-color="#FFFFFF"/><stop offset="0.5" stop-color="#E4F0FC"/><stop offset="1" stop-color="#7CC8F4"/></linearGradient></defs>
<path d="M0.5 4.5 L3.5 0.5 H9.5 L12.5 4.5 V11.5 H0.5 Z" fill="url(#eb3153)" stroke="#6C6CAC"/>
<path d="M1 4.5 L3.8 1 H9.2 L12 4.5 L6.5 7.5 Z" fill="url(#ef3153)"/>
<path d="M0.8 4.5 L6.5 8.2 L12.2 4.5 M0.8 11.2 L5 8 M12.2 11.2 L8 8" fill="none" stroke="#9090C8" stroke-width="0.8"/>
</svg>
<div class="t" style="left:43.00px;top:156.27px;font-size:11.5px;color:#000;">newsletter@soft32.com</div>
<div class="t" style="left:211.00px;top:156.27px;font-size:11.5px;color:#000;letter-spacing:-0.258px;">Larger iPhone and iPhone 5c ...</div>
<div class="t" style="left:378.00px;top:156.27px;font-size:11.5px;color:#000;">mailconvertertool@gmail.com</div>
<div class="t" style="left:546.00px;top:156.09px;font-size:11px;color:#000;">31-01-2014 03:25:23</div>
<div class="t" style="left:713.00px;top:156.09px;font-size:11px;color:#000;">31-01-2014 03:25:23</div>
<div class="t" style="left:881.00px;top:156.27px;font-size:11.5px;color:#000;">19</div>
<div class="a" style="left:0;top:193px;width:1045px;height:1px;background:#C6DDF8"></div>
<svg class="a" style="left:3px;top:175px" width="14" height="13" viewBox="0 0 14 13">
<defs><linearGradient id="ef3175" x1="0" y1="0" x2="1" y2="0.6"><stop offset="0" stop-color="#FFFBE0"/><stop offset="0.35" stop-color="#FFEE90"/><stop offset="0.75" stop-color="#FFC050"/><stop offset="1" stop-color="#F8B040"/></linearGradient>
<linearGradient id="eb3175" x1="0" y1="0" x2="1" y2="1"><stop offset="0" stop-color="#FFFFFF"/><stop offset="0.5" stop-color="#E4F0FC"/><stop offset="1" stop-color="#7CC8F4"/></linearGradient></defs>
<path d="M0.5 4.5 L3.5 0.5 H9.5 L12.5 4.5 V11.5 H0.5 Z" fill="url(#eb3175)" stroke="#6C6CAC"/>
<path d="M1 4.5 L3.8 1 H9.2 L12 4.5 L6.5 7.5 Z" fill="url(#ef3175)"/>
<path d="M0.8 4.5 L6.5 8.2 L12.2 4.5 M0.8 11.2 L5 8 M12.2 11.2 L8 8" fill="none" stroke="#9090C8" stroke-width="0.8"/>
</svg>
<div class="t" style="left:43.00px;top:178.27px;font-size:11.5px;color:#000;">"Virtual Event from developer...</div>
<div class="t" style="left:211.00px;top:178.27px;font-size:11.5px;color:#000;letter-spacing:-0.194px;">Take a Virtual Coffee Break w...</div>
<div class="t" style="left:378.00px;top:178.27px;font-size:11.5px;color:#000;">mailconvertertool@gmail.com</div>
<div class="t" style="left:546.00px;top:178.09px;font-size:11px;color:#000;">29-01-2014 13:35:44</div>
<div class="t" style="left:713.00px;top:178.09px;font-size:11px;color:#000;">29-01-2014 13:35:44</div>
<div class="t" style="left:881.00px;top:178.27px;font-size:11.5px;color:#000;">17</div>
<div class="a" style="left:0;top:215px;width:1045px;height:1px;background:#C6DDF8"></div>
<svg class="a" style="left:3px;top:197px" width="14" height="13" viewBox="0 0 14 13">
<defs><linearGradient id="ef3197" x1="0" y1="0" x2="1" y2="0.6"><stop offset="0" stop-color="#FFFBE0"/><stop offset="0.35" stop-color="#FFEE90"/><stop offset="0.75" stop-color="#FFC050"/><stop offset="1" stop-color="#F8B040"/></linearGradient>
<linearGradient id="eb3197" x1="0" y1="0" x2="1" y2="1"><stop offset="0" stop-color="#FFFFFF"/><stop offset="0.5" stop-color="#E4F0FC"/><stop offset="1" stop-color="#7CC8F4"/></linearGradient></defs>
<path d="M0.5 4.5 L3.5 0.5 H9.5 L12.5 4.5 V11.5 H0.5 Z" fill="url(#eb3197)" stroke="#6C6CAC"/>
<path d="M1 4.5 L3.8 1 H9.2 L12 4.5 L6.5 7.5 Z" fill="url(#ef3197)"/>
<path d="M0.8 4.5 L6.5 8.2 L12.2 4.5 M0.8 11.2 L5 8 M12.2 11.2 L8 8" fill="none" stroke="#9090C8" stroke-width="0.8"/>
</svg>
<div class="t" style="left:43.00px;top:200.27px;font-size:11.5px;color:#000;">"Saurav Sinha Shadow From...</div>
<div class="t" style="left:211.00px;top:200.27px;font-size:11.5px;color:#000;letter-spacing:-0.186px;">Register Now for the Webinar...</div>
<div class="t" style="left:378.00px;top:200.27px;font-size:11.5px;color:#000;">mailconvertertool@gmail.com</div>
<div class="t" style="left:546.00px;top:200.09px;font-size:11px;color:#000;">28-01-2014 05:55:08</div>
<div class="t" style="left:713.00px;top:200.09px;font-size:11px;color:#000;">28-01-2014 05:55:08</div>
<div class="t" style="left:881.00px;top:200.27px;font-size:11.5px;color:#000;">17</div>
</div>
<div class="a" style="left:1349px;top:100px;width:17px;height:202px;background:#F0F0F0"></div>
<div class="a" style="left:1350px;top:120px;width:15px;height:17px;background:#CDCDCD"></div>
<svg class="a" style="left:1353px;top:105px" width="9" height="6" viewBox="0 0 9 6"><path d="M1 5 L4.5 1.5 L8 5" fill="none" stroke="#505050" stroke-width="1.6"/></svg>
<svg class="a" style="left:1353px;top:290px" width="9" height="6" viewBox="0 0 9 6"><path d="M1 1 L4.5 4.5 L8 1" fill="none" stroke="#505050" stroke-width="1.6"/></svg>
<div class="a" style="left:304px;top:306px;width:1062px;height:396px;background:#F0F0F0"></div>
<div class="a" style="left:307px;top:338px;width:1058px;height:1px;background:#A0A0A0"></div>
<div class="a" style="left:307px;top:308px;width:102px;height:31px;background:#F0F0F0;border:1px solid #A0A0A0;border-bottom:none;border-radius:3px 3px 0 0"></div>
<div class="t" style="left:313.00px;top:318.27px;font-size:11.5px;color:#000;letter-spacing:0.116px;">Normal Mail View</div>
<div class="a" style="left:408px;top:308px;width:77px;height:31px;background:#fff;border:1px solid #A0A0A0;border-bottom:none;border-radius:3px 3px 0 0"></div>
<div class="t" style="left:414.10px;top:318.27px;font-size:11.5px;color:#000;letter-spacing:-0.142px;">Attachments</div>
<div class="a" style="left:1364px;top:338px;width:1px;height:364px;background:#A0A0A0"></div>
<div class="a" style="left:304px;top:702px;width:1061px;height:1px;background:#EEF2F8"></div><div class="a" style="left:304px;top:701px;width:1061px;height:1px;background:#A0A0A0"></div><div class="a" style="left:1365px;top:338px;width:1px;height:364px;background:#F8F8F8"></div>
<div class="a" style="left:306px;top:338px;width:1px;height:364px;background:#A0A0A0"></div>
<div class="a" style="left:304px;top:338px;width:2px;height:364px;background:#F6F6F6"></div>
<div class="a" style="left:307px;top:339px;width:1057px;height:362px;background:#fff"></div>
<div class="a" style="left:307px;top:340px;width:426px;height:360px;background:#fff"></div>
<div class="a" style="left:308px;top:340px;width:425px;height:23px;background:linear-gradient(#FFFFFF,#EEF4FE 40%,#C9DEFB);border:1px solid #A0A0A0"></div>
<div class="a" style="left:327px;top:343px;width:1px;height:17px;background:#A0A0A0"></div><div class="a" style="left:328px;top:343px;width:1px;height:17px;background:#FFFFFF"></div>
<div class="a" style="left:462px;top:343px;width:1px;height:17px;background:#A0A0A0"></div><div class="a" style="left:463px;top:343px;width:1px;height:17px;background:#FFFFFF"></div>
<div class="a" style="left:598px;top:343px;width:1px;height:17px;background:#A0A0A0"></div><div class="a" style="left:599px;top:343px;width:1px;height:17px;background:#FFFFFF"></div>
<div class="t" style="left:333.80px;top:348.27px;font-size:11.5px;color:#000;letter-spacing:-0.074px;">Attachment Name</div>
<div class="t" style="left:469.50px;top:348.27px;font-size:11.5px;color:#000;letter-spacing:-0.310px;">Subject</div>
<div class="t" style="left:604.30px;top:348.69px;font-size:11px;color:#000;letter-spacing:-0.682px;">Size (KB)</div>
<div class="a" style="left:308px;top:363px;width:425px;height:21px;background:#3399FF"></div>
<svg class="a" style="left:311px;top:365px" width="15" height="15" viewBox="0 0 15 15">
<defs><linearGradient id="ai" x1="0" y1="0" x2="0" y2="1"><stop offset="0" stop-color="#B8D8F0"/><stop offset="0.45" stop-color="#F0F6FA"/><stop offset="0.65" stop-color="#C8E8C0"/><stop offset="0.75" stop-color="#48C040"/><stop offset="1" stop-color="#58C850"/></linearGradient></defs>
<rect x="0.5" y="0.5" width="14" height="14" fill="#F0F0F0" stroke="#9A9A9A"/>
<rect x="2" y="2" width="11" height="11" fill="url(#ai)"/>
</svg>
<div class="t" style="left:331.20px;top:368.77px;font-size:11.5px;color:#fff;letter-spacing:0.365px;">bg.png</div>
<div class="t" style="left:466.00px;top:368.77px;font-size:11.5px;color:#fff;letter-spacing:0.149px;">Windows 7 Download ...</div>
<div class="t" style="left:601.50px;top:368.77px;font-size:11.5px;color:#fff;letter-spacing:-1.200px;">17</div>
<div class="a" style="left:733px;top:340px;width:4px;height:359px;background:#BFDBFF"></div>
<div class="a" style="left:1345px;top:340px;width:17px;height:342px;background:#F7F7F7"></div>
<svg class="a" style="left:1349px;top:357px" width="11" height="7" viewBox="0 0 11 7"><path d="M1 6.2 L5.5 1.7 L10 6.2" fill="none" stroke="#BDBDBD" stroke-width="2.3"/></svg>
<svg class="a" style="left:1349px;top:657px" width="11" height="7" viewBox="0 0 11 7"><path d="M1 1 L5.5 5.5 L10 1" fill="none" stroke="#BDBDBD" stroke-width="2.3"/></svg>
<div class="a" style="left:737px;top:682px;width:625px;height:17px;background:#F0F0F0"></div>
<div class="a" style="left:771px;top:683px;width:530px;height:15px;background:#CDCDCD"></div>
<svg class="a" style="left:754px;top:685px" width="9" height="11" viewBox="0 0 9 11"><path d="M7.5 1 L2.5 5.5 L7.5 10" fill="none" stroke="#505050" stroke-width="2.5"/></svg>
<svg class="a" style="left:1319px;top:685px" width="9" height="11" viewBox="0 0 9 11"><path d="M1.5 1 L6.5 5.5 L1.5 10" fill="none" stroke="#505050" stroke-width="2.5"/></svg>
<svg class="a" style="left:747px;top:355px" width="598" height="62" viewBox="0 0 598 62">
<defs>
<linearGradient id="bg1" x1="0" y1="0" x2="1" y2="0">
<stop offset="0" stop-color="#0A6BD5"/><stop offset="0.25" stop-color="#1786E3"/><stop offset="0.45" stop-color="#34A8E9"/>
<stop offset="0.62" stop-color="#62C8EF"/><stop offset="0.72" stop-color="#8CD9F4"/><stop offset="0.85" stop-color="#55C3EE"/><stop offset="1" stop-color="#2BA3E6"/></linearGradient>
<linearGradient id="bg2" x1="0" y1="0" x2="0" y2="1"><stop offset="0" stop-color="#fff" stop-opacity="0.08"/><stop offset="1" stop-color="#fff" stop-opacity="0"/></linearGradient>
<linearGradient id="s7" x1="0" y1="0" x2="0.3" y2="1"><stop offset="0" stop-color="#fff" stop-opacity="0.85"/><stop offset="0.5" stop-color="#E8F8FF" stop-opacity="0.45"/><stop offset="1" stop-color="#fff" stop-opacity="0.1"/></linearGradient>
<filter id="bl" x="-10%" y="-50%" width="120%" height="200%"><feGaussianBlur stdDeviation="1.2"/></filter>
<filter id="tsh" x="-10%" y="-20%" width="120%" height="140%"><feGaussianBlur stdDeviation="0.6"/></filter>
</defs>
<path d="M0 38.5 Q299 74.5 598 38 " fill="none" stroke="#7E96AC" stroke-width="2.5" filter="url(#bl)" opacity="0.8"/>
<path d="M0 0 H598 V36.5 Q299 72.5 0 37 Z" fill="url(#bg1)"/>
<path d="M0 0 H598 V36.5 Q299 72.5 0 37 Z" fill="url(#bg2)"/>
<path d="M20 36 Q180 22 420 30" fill="none" stroke="#8ED8FA" stroke-width="0.8" opacity="0.5"/>
<path d="M120 44 Q300 58 560 40" fill="none" stroke="#A8E4FA" stroke-width="0.8" opacity="0.35"/>
<path d="M330 0 L520 50 M380 0 L470 45" stroke="#C8F0FF" stroke-width="1" opacity="0.25"/>
<circle cx="381" cy="11" r="3.5" fill="#D8F4FF" opacity="0.45"/>
<circle cx="492" cy="40" r="0.9" fill="#fff" opacity="0.8"/>
<path d="M256 6 Q275 3 296 2.5 L295 7 L270 50 L263 49 L288 8 Q272 8.5 258 10 Z" fill="url(#s7)" opacity="0.85"/>
<path d="M403 5 Q450 28 493 46" fill="none" stroke="#78D058" stroke-width="1.3"/>
<path d="M463 0 L466 20" fill="none" stroke="#8ED860" stroke-width="1.2"/>
<path d="M456 9 C452 5 455 2 460 5 L463 9 C466 3 471 3 470 8 C468 12 462 13 456 9 Z" fill="#A6DE52"/>
<path d="M458 22 C450 18 448 12 455 12 L464 18 C468 9 476 6 478 12 C476 20 468 25 458 22 Z" fill="#98D848"/>
<path d="M470 22 C472 14 479 10 482 12 C482 18 477 24 470 22 Z" fill="#A8E058"/>
<path d="M455 36 C450 32 452 28 456 29 L466 33 C470 26 478 26 478 31 C474 38 466 42 458 44 Z" fill="#9ADA4C"/>
<path d="M453 38 C450 42 451 45 454 44 L460 40 Z" fill="#98D848"/>
<path d="M486 25 L493 27 L497 22 L496 29 L503 32 L495 32 L491 38 L492 31 Z" fill="#fff" opacity="0.95"/>
</svg>
<div class="t" style="left:891.50px;top:372.00px;font-size:28px;color:#fff;letter-spacing:0.069px;text-shadow:1px 1.5px 1.5px rgba(0,50,100,0.45);">Windows</div>
<div class="t" style="left:1038.60px;top:372.00px;font-size:28px;color:#fff;letter-spacing:0.732px;text-shadow:1px 1.5px 1.5px rgba(0,50,100,0.45);">download</div>
</body></html>
